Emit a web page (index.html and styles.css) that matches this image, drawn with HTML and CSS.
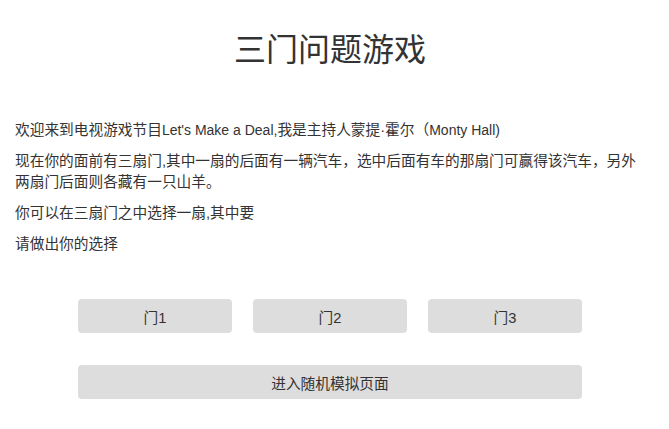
FILE: index.html
```html
<!DOCTYPE html>
<html lang="zh">
<head>
<meta charset="utf-8">
<title>三门问题游戏</title>
<link rel="stylesheet" href="styles.css">
</head>
<body>
<div class="page">
  <h1 class="title">三门问题游戏</h1>
  <div class="intro">
    <p>欢迎来到电视游戏节目<span lang="en" class="latin">Let's Make a Deal,</span>我是主持人蒙提·霍尔（<span lang="en" class="latin">Monty Hall)</span></p>
    <p>现在你的面前有三扇门,其中一扇的后面有一辆汽车，选中后面有车的那扇门可赢得该汽车，另外两扇门后面则各藏有一只山羊。</p>
    <p>你可以在三扇门之中选择一扇,其中要</p>
    <p>请做出你的选择</p>
  </div>
  <div class="actions">
    <div class="doors">
      <button class="btn">门1</button>
      <button class="btn">门2</button>
      <button class="btn">门3</button>
    </div>
    <button class="btn btn-wide">进入随机模拟页面</button>
  </div>
</div>
</body>
</html>
```
FILE: styles.css
```css
html, body {
  margin: 0;
  background: #fff;
}
body {
  padding: 0 24px 0 15px;
  font-family: "Liberation Sans", "Noto Sans CJK SC", sans-serif;
  color: #333;
  font-size: 14.7px;
}
.title {
  margin: 0;
  padding-top: 28px;
  font-size: 32px;
  font-weight: normal;
  line-height: 44px;
  text-align: center;
  color: #333;
}
.intro {
  margin-top: 48px;
}
.intro p {
  margin: 0 0 10px;
  line-height: 21px;
}
.intro p:last-child {
  margin-bottom: 0;
}
.latin {
  font-size: 14px;
}
.actions {
  width: 504px;
  margin: 44px auto 0;
  display: flex;
  flex-direction: column;
  gap: 32px;
}
.doors {
  display: flex;
  justify-content: space-between;
}
.btn {
  width: 154px;
  height: 34px;
  border: none;
  border-radius: 4px;
  background: #ddd;
  color: #333;
  font-family: inherit;
  font-size: 14.7px;
  padding: 0;
}
.btn-wide {
  width: 100%;
}
```
